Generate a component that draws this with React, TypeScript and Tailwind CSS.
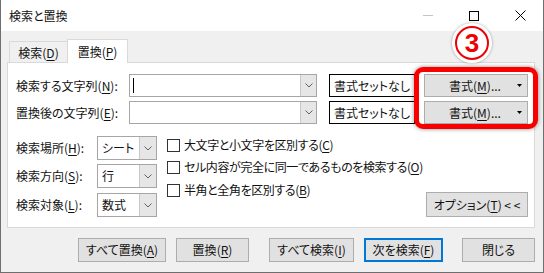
import React from "react";

function Chevron() {
  return (
    <svg width="8" height="5" viewBox="0 0 8 5" className="block">
      <polyline points="0.5,0.5 4,4 7.5,0.5" fill="none" stroke="#606060" strokeWidth="1" />
    </svg>
  );
}

function ComboInput({ cursor }: { cursor?: boolean }) {
  return (
    <div className="w-[188px] h-[23px] border border-[#a6a6a6] bg-white flex">
      <div className="flex-1 flex items-center pl-[3px]">
        {cursor && <div className="w-px h-[15px] bg-black" />}
      </div>
      <div className="w-[16px] h-full bg-[#e6e6e6] border-l border-[#c8c8c8] flex items-center justify-center">
        <Chevron />
      </div>
    </div>
  );
}

function FormatButton() {
  return (
    <div className="w-[104px] h-[23px] ml-[9px] bg-[#e1e1e1] border border-[#adadad] flex items-center">
      <span className="w-[10px]" />
      <span className="flex-1 text-center">
        書式(<u className="underline-offset-2">M</u>)...
      </span>
      <svg width="10" height="5" viewBox="0 0 10 5" className="mr-[2px]">
        <polygon points="2,1 7,1 4.5,4" fill="#000" />
      </svg>
    </div>
  );
}

function SelectBox({ value }: { value: string }) {
  return (
    <div className="w-[60px] h-[24px] border border-[#a6a6a6] bg-white flex">
      <div className="flex-1 flex items-center pl-[4px]">{value}</div>
      <div className="w-[17px] h-full bg-[#e6e6e6] border-l border-[#c8c8c8] flex items-center justify-center">
        <Chevron />
      </div>
    </div>
  );
}

function CheckRow({ label, k }: { label: string; k: string }) {
  return (
    <div className="h-[22px] flex items-center">
      <div className="w-[13px] h-[13px] border border-[#333] bg-white" />
      <span className="ml-[4px] tracking-[-0.4px]">
        {label}(<u className="underline-offset-2">{k}</u>)
      </span>
    </div>
  );
}

const bottomButtons = [
  { text: "すべて置換", k: "A", w: "w-[88px]", ml: "" },
  { text: "置換", k: "R", w: "w-[73px]", ml: "ml-[10px]" },
  { text: "すべて検索", k: "I", w: "w-[85px]", ml: "ml-[20px]" },
  { text: "次を検索", k: "F", w: "w-[79px]", ml: "ml-[10px]", primary: true },
  { text: "閉じる", k: "", w: "w-[73px]", ml: "ml-[19px]" },
];

export default function App() {
  return (
    <div className="w-[544px] h-[273px] relative overflow-hidden whitespace-nowrap bg-[#f0f0f0] border-x border-b border-[#6e6e6e] text-[12px] leading-none text-[#111] [font-feature-settings:'palt'] font-['Noto_Sans_CJK_JP','Noto_Sans',sans-serif]">
      {/* title bar */}
      <div className="h-[31px] bg-white flex items-center">
        <span className="pl-[8px] flex-1">検索と置換</span>
        <div className="w-[46px] h-full flex items-center justify-center">
          <div className="w-[10px] h-px bg-[#c4c4c4]" />
        </div>
        <div className="w-[46px] h-full flex items-center justify-center">
          <div className="w-[10px] h-[10px] border border-black" />
        </div>
        <div className="w-[46px] h-full flex items-center justify-center">
          <svg width="11" height="11" viewBox="0 0 11 11">
            <path d="M0.5 0.5 L10.5 10.5 M10.5 0.5 L0.5 10.5" stroke="#000" strokeWidth="1" />
          </svg>
        </div>
      </div>

      {/* tabs */}
      <div className="mt-[8px] pl-[8px] flex items-end">
        <div className="w-[58px] h-[21px] border-t border-l border-[#d9d9d9] flex items-center justify-center pt-[2px]">
          検索(<u className="underline-offset-2">D</u>)
        </div>
        <div className="w-[61px] h-[24px] -mb-px relative z-10 bg-white border-x border-t border-[#d9d9d9] flex items-center justify-center">
          置換(<u className="underline-offset-2">P</u>)
        </div>
      </div>

      {/* panel */}
      <div className="ml-[6px] w-[528px] h-[166px] bg-white border border-[#d9d9d9] pt-[11px] pl-[8px]">
        <div className="h-[23px] flex items-center">
          <span className="w-[113px]">
            検索する文字列(<u className="underline-offset-2">N</u>):
          </span>
          <ComboInput cursor />
          <div className="w-[86px] h-[23px] ml-[12px] border border-black bg-white flex items-center justify-center">
            書式セットなし
          </div>
          <FormatButton />
        </div>
        <div className="h-[23px] mt-[4px] flex items-center">
          <span className="w-[113px]">
            置換後の文字列(<u className="underline-offset-2">E</u>):
          </span>
          <ComboInput />
          <div className="w-[86px] h-[23px] ml-[12px] border border-black bg-white flex items-center justify-center">
            書式セットなし
          </div>
          <FormatButton />
        </div>

        <div className="mt-[12px] flex items-start">
          <div className="flex flex-col">
            <div className="h-[24px] flex items-center">
              <span className="w-[81px]">
                検索場所(<u className="underline-offset-2">H</u>):
              </span>
              <SelectBox value="シート" />
            </div>
            <div className="h-[24px] mt-[4px] flex items-center">
              <span className="w-[81px]">
                検索方向(<u className="underline-offset-2">S</u>):
              </span>
              <SelectBox value="行" />
            </div>
            <div className="h-[24px] mt-[5px] flex items-center">
              <span className="w-[81px]">
                検索対象(<u className="underline-offset-2">L</u>):
              </span>
              <SelectBox value="数式" />
            </div>
          </div>
          <div className="ml-[10px] -mt-[2px] flex flex-col">
            <CheckRow label="大文字と小文字を区別する" k="C" />
            <CheckRow label="セル内容が完全に同一であるものを検索する" k="O" />
            <div className="mt-[1px]">
              <CheckRow label="半角と全角を区別する" k="B" />
            </div>
          </div>
          <div className="ml-auto mr-[6px] self-end w-[102px] h-[25px] bg-[#e1e1e1] border border-[#adadad] flex items-center justify-center">
            オプション(<u className="underline-offset-2">T</u>)&nbsp;&lt;&nbsp;&lt;
          </div>
        </div>
      </div>

      {/* bottom buttons */}
      <div className="mt-[10px] pl-[77px] flex">
        {bottomButtons.map((b) => (
          <div
            key={b.text}
            className={`${b.w} ${b.ml} h-[24px] bg-[#e1e1e1] flex items-center justify-center ${
              b.primary ? "border-2 border-[#0078d7]" : "border border-[#adadad]"
            }`}
          >
            {b.text}
            {b.k && (
              <>
                (<u className="underline-offset-2">{b.k}</u>)
              </>
            )}
          </div>
        ))}
      </div>

      {/* annotation overlay */}
      <div className="absolute left-[413px] top-[67px] w-[124px] h-[62px] rounded-[9px] border-[5px] border-[#f80000] shadow-[0_0_4px_rgba(0,0,0,0.45)] pointer-events-none" />
      <div className="absolute left-[451px] top-[23px] w-[40px] h-[40px] rounded-full bg-white shadow-[0_0_3px_rgba(0,0,0,0.35)] flex items-center justify-center">
        <div className="w-[34px] h-[34px] rounded-full border-[2px] border-[#f00000] flex items-center justify-center text-[#f00000] text-[26px] font-bold font-['Liberation_Sans',sans-serif]">
          3
        </div>
      </div>
    </div>
  );
}
